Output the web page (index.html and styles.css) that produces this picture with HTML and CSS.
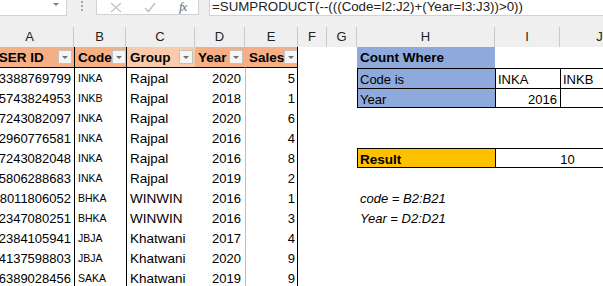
FILE: index.html
```html
<!DOCTYPE html>
<html lang="en">
<head>
    <meta charset="UTF-8">
    <title>Count Where</title>
    <link rel="stylesheet" href="styles.css">
</head>
<body>
    <div class="toolbar">
        <div class="name-box"><span class="caret"></span></div>
        <div class="grip"><i></i><i></i><i></i></div>
        <div class="fx-buttons">
            <svg class="icon" width="12" height="11" viewBox="0 0 12 11">
                <path d="M1 1 L11 10 M11 1 L1 10" stroke="#c4c4c4" stroke-width="1.3" fill="none"/>
            </svg>
            <svg class="icon" width="12" height="11" viewBox="0 0 12 11">
                <path d="M1 6 L4.5 9.5 L11 1" stroke="#c4c4c4" stroke-width="1.6" fill="none"/>
            </svg>
            <span class="fx">fx</span>
        </div>
        <div class="formula">=SUMPRODUCT(--(((Code=I2:J2)+(Year=I3:J3))&gt;0))</div>
    </div>

    <div class="sheet" id="sheet"></div>

    <script>
        const letters = ['A', 'B', 'C', 'D', 'E', 'F', 'G', 'H', 'I', 'J'];

        const records = [
            ['3388769799', 'INKA', 'Rajpal', '2020', '5'],
            ['5743824953', 'INKB', 'Rajpal', '2018', '1'],
            ['7243082097', 'INKA', 'Rajpal', '2020', '6'],
            ['2960776581', 'INKA', 'Rajpal', '2016', '4'],
            ['7243082048', 'INKA', 'Rajpal', '2016', '8'],
            ['5806288683', 'INKA', 'Rajpal', '2019', '2'],
            ['8011806052', 'BHKA', 'WINWIN', '2016', '1'],
            ['2347080251', 'BHKA', 'WINWIN', '2016', '3'],
            ['2384105941', 'JBJA', 'Khatwani', '2017', '4'],
            ['4137598803', 'JBJA', 'Khatwani', '2020', '9'],
            ['6389028456', 'SAKA', 'Khatwani', '2019', '9']
        ];

        // cells of columns H, I, J by sheet row
        const side = {
            1: [['Count Where', 'blue bold'], ['', ''], ['', '']],
            2: [['Code is', 'blue box'], ['INKA', 'box'], ['INKB', 'box']],
            3: [['Year', 'blue box end'], ['2016', 'box end right'], ['', 'box end']],
            6: [['Result', 'gold bold box end'], ['10', 'box end center span2']],
            8: [['code = B2:B21', 'note']],
            9: [['Year = D2:D21', 'note']]
        };

        const sheet = document.getElementById('sheet');

        function cell(text, cls) {
            const div = document.createElement('div');
            div.className = 'cell ' + cls;
            div.textContent = text;
            sheet.appendChild(div);
            return div;
        }

        function headCell(text, cls) {
            const div = cell('', 'th ' + cls);
            const label = document.createElement('span');
            label.textContent = text;
            const button = document.createElement('span');
            button.className = 'dd';
            div.appendChild(label);
            div.appendChild(button);
        }

        letters.forEach(l => cell(l, 'colhead'));

        for (let r = 1; r <= 12; r++) {
            if (r === 1) {
                headCell('USER ID', 'c-id');
                headCell('Code', 'c-code');
                headCell('Group', 'c-grp light');
                headCell('Year', 'c-yr');
                headCell('Sales', 'c-sales');
            } else {
                const rec = records[r - 2];
                cell(rec[0], 'c-id right');
                cell(rec[1], 'c-code small');
                cell(rec[2], 'c-grp');
                cell(rec[3], 'c-yr right');
                cell(rec[4], 'c-sales right');
            }
            cell('', '');
            cell('', '');
            const extra = side[r] || [['', ''], ['', ''], ['', '']];
            extra.forEach(([text, cls]) => cell(text, cls));
            if (extra.length === 1) {
                cell('', '');
                cell('', '');
            }
        }
    </script>
</body>
</html>
```

FILE: styles.css
```css
body {
    margin: 0;
    background: #ffffff;
    overflow: hidden;
    font-family: "Liberation Sans", Arial, sans-serif;
    font-size: 13px;
    color: #000;
}

.toolbar {
    display: flex;
    align-items: flex-start;
    height: 27px;
    background: #efefef;
}

.name-box {
    position: relative;
    width: 66px;
    height: 15px;
    background: #fff;
    border-right: 1px solid #d2d2d2;
    border-bottom: 1px solid #d2d2d2;
}

.caret {
    position: absolute;
    left: 53px;
    top: 3px;
    border-left: 3px solid transparent;
    border-right: 3px solid transparent;
    border-top: 3px solid #808080;
}

.grip {
    display: flex;
    flex-direction: column;
    gap: 2px;
    margin: 1px 0 0 14px;
}

.grip i {
    width: 2px;
    height: 2px;
    background: #a8a8a8;
}

.fx-buttons {
    display: flex;
    align-items: center;
    width: 103px;
    height: 15px;
    margin-left: 13px;
    padding-left: 13px;
    gap: 22px;
    box-sizing: border-box;
    background: #fff;
    border-left: 1px solid #d2d2d2;
    border-right: 1px solid #d2d2d2;
    border-bottom: 1px solid #d2d2d2;
}

.fx {
    font-family: "Liberation Serif", serif;
    font-style: italic;
    font-size: 13px;
    color: #6d6d6d;
    margin-left: 1px;
    letter-spacing: -1px;
}

.formula {
    flex: 1;
    height: 15px;
    margin-left: 10px;
    padding-left: 2px;
    background: #fff;
    border-left: 1px solid #d2d2d2;
    border-bottom: 1px solid #d2d2d2;
    font-size: 13.3px;
    line-height: 14px;
    white-space: nowrap;
    color: #222;
}

.sheet {
    display: grid;
    grid-template-columns: 88px 52px 69px 50px 53px 29px 30px 138px 65px 80px;
    grid-template-rows: 20px 21px;
    grid-auto-rows: 20px;
    margin-left: -14px;
}

.cell {
    box-sizing: border-box;
    padding: 0 3px;
    line-height: 21px;
    white-space: nowrap;
    overflow: hidden;
}

.colhead {
    background: #efefef;
    border-right: 1px solid #cacaca;
    text-align: center;
    line-height: 20px;
    color: #222;
}

.th {
    display: flex;
    align-items: center;
    justify-content: space-between;
    background: #f4b084;
    font-weight: bold;
    font-size: 13.5px;
    border-bottom: 1px solid #000;
    padding: 0 2px 0 3px;
}

.th.light {
    background: #f8cbad;
}

.dd {
    position: relative;
    flex: none;
    width: 14px;
    height: 14px;
    box-sizing: border-box;
    background: #f5f5f5;
    border: 1px solid #c3c3c3;
}

.dd:after {
    content: "";
    position: absolute;
    left: 3px;
    top: 5px;
    border-left: 3px solid transparent;
    border-right: 3px solid transparent;
    border-top: 3px solid #6f6f6f;
}

.c-code,
.c-grp {
    border-left: 1px solid #000;
}

.c-sales {
    border-left: 1px solid #bdbdbd;
    border-right: 1px solid #000;
}

.c-sales.right {
    padding-right: 2px;
}

.c-yr.right {
    padding-right: 4px;
}

.small {
    font-size: 10.5px;
}

.c-grp {
    font-size: 13.5px;
}

.right {
    text-align: right;
}

.center {
    text-align: center;
}

.bold {
    font-weight: bold;
    font-size: 13.5px;
}

.blue {
    background: #8ea9db;
}

.gold {
    background: #ffc000;
}

.box {
    border-top: 1px solid #000;
    border-left: 1px solid #000;
    padding-left: 2px;
}

.box.end {
    border-bottom: 1px solid #000;
}

.span2 {
    grid-column: span 2;
}

.note {
    font-style: italic;
}
```
